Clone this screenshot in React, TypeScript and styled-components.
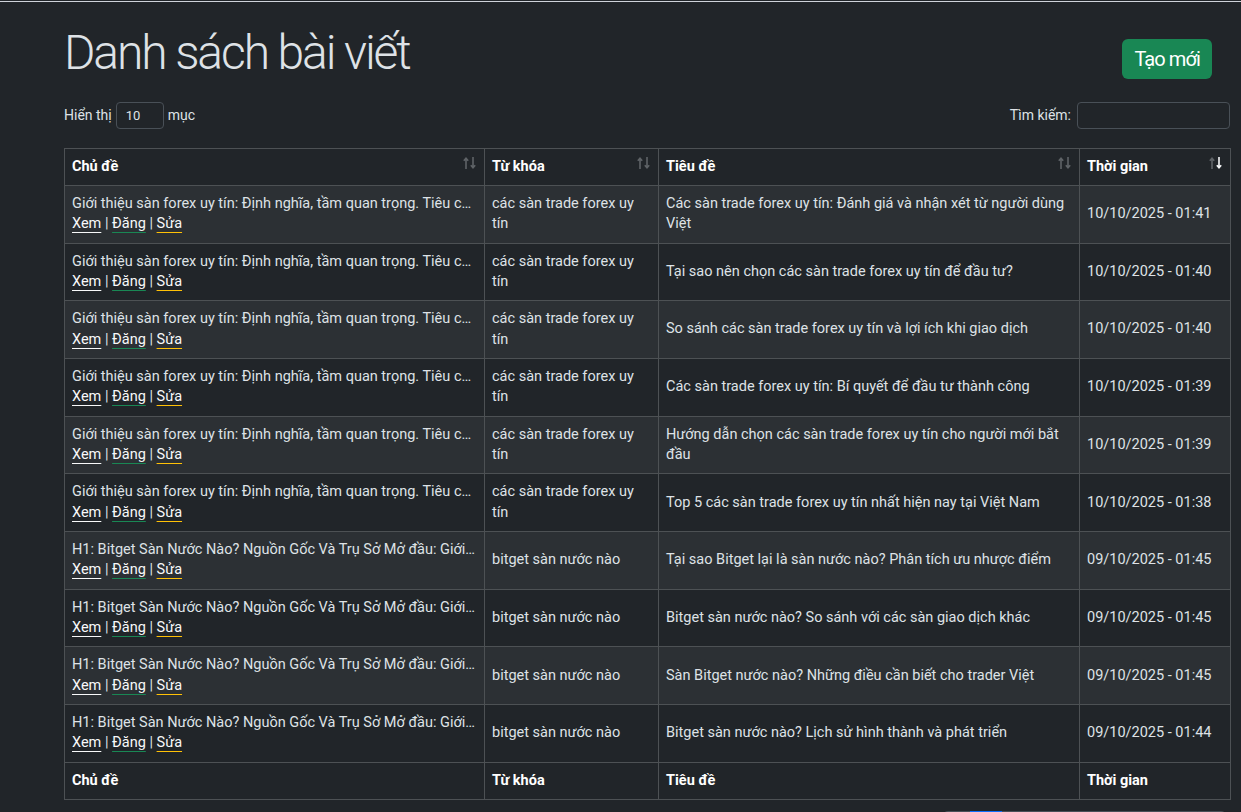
import styled, { createGlobalStyle } from "styled-components";

const GlobalStyle = createGlobalStyle`
  html, body {
    margin: 0;
    background: #212529;
  }
  body {
    padding-top: 1px;
    font-family: Roboto, "Liberation Sans", sans-serif;
    color: #dee2e6;
    font-size: 14px;
  }
`;

const Page = styled.div`
  border-top: 1px solid #cfd3da;
  padding: 0 11px 40px 64px;
`;

const Header = styled.div`
  display: flex;
  justify-content: space-between;
  align-items: flex-start;
  padding-right: 18px;
`;

const Title = styled.h1`
  margin: 22px 0 0;
  font-size: 48px;
  font-weight: 300;
  line-height: 1.2;
  letter-spacing: -2.1px;
  color: #dee2e6;
`;

const CreateButton = styled.button`
  margin-top: 37px;
  height: 40px;
  padding: 0 12px;
  border: none;
  border-radius: 6px;
  background: #198754;
  color: #fff;
  font-family: inherit;
  font-size: 20px;
  letter-spacing: -0.9px;
  cursor: pointer;
`;

const Controls = styled.div`
  display: flex;
  justify-content: space-between;
  align-items: center;
  margin-top: 20px;
  margin-bottom: 19px;
`;

const ControlGroup = styled.label`
  display: flex;
  align-items: center;
  gap: 4px;
  font-size: 14px;
  color: #dee2e6;
`;

const SmallSelect = styled.div`
  box-sizing: border-box;
  width: 48px;
  height: 27px;
  padding-left: 9px;
  display: flex;
  align-items: center;
  border: 1px solid #495057;
  border-radius: 4px;
  font-size: 13px;
  color: #dee2e6;
`;

const SearchInput = styled.input`
  box-sizing: border-box;
  width: 153px;
  height: 27px;
  margin-left: 2px;
  border: 1px solid #495057;
  border-radius: 4px;
  background: transparent;
  color: #dee2e6;
`;

const Table = styled.table`
  width: 100%;
  table-layout: fixed;
  border-collapse: collapse;
  font-size: 14.5px;
  line-height: 20.35px;
`;

const HeadCell = styled.th`
  border: 1px solid #4d5154;
  padding: 8px 7px;
  text-align: left;
  color: #fff;
  font-weight: 700;
  background: #212529;
`;

const HeadInner = styled.div`
  display: flex;
  justify-content: space-between;
  align-items: flex-start;
`;

const SortIcon = styled.svg`
  flex: none;
  margin-top: -1px;
  margin-right: 1px;
`;

const Row = styled.tr<{ $striped: boolean }>`
  background: ${({ $striped }) => ($striped ? "#2c3034" : "#212529")};
`;

const Cell = styled.td`
  border: 1px solid #4d5154;
  padding: 8px 7px;
  vertical-align: middle;
  color: #dee2e6;
`;

const Truncate = styled.div`
  white-space: nowrap;
  overflow: hidden;
  text-overflow: ellipsis;
`;

const ActionLink = styled.a<{ $line: string }>`
  color: #f8f9fa;
  text-decoration: underline;
  text-decoration-color: ${({ $line }) => $line};
  text-underline-offset: 4px;
  cursor: pointer;
`;

const Pagination = styled.ul`
  display: flex;
  justify-content: flex-end;
  list-style: none;
  margin: 11px 3px 0 0;
  padding: 0;
`;

const PageItem = styled.li<{ $active?: boolean; $w: number }>`
  box-sizing: border-box;
  width: ${({ $w }) => $w}px;
  height: 36px;
  display: flex;
  align-items: center;
  justify-content: center;
  margin-left: -1px;
  border: 1px solid ${({ $active }) => ($active ? "#0d6efd" : "#495057")};
  background: ${({ $active }) => ($active ? "#0d6efd" : "#212529")};
  color: ${({ $active }) => ($active ? "#fff" : "#6ea8fe")};
  font-size: 14px;
  &:first-child {
    border-radius: 6px 0 0 6px;
  }
  &:last-child {
    border-radius: 0 6px 6px 0;
  }
`;

interface Post {
  topic: string;
  keyword: string;
  title: string;
  time: string;
}

const forexTopic =
  "Giới thiệu sàn forex uy tín: Định nghĩa, tầm quan trọng. Tiêu chí đánh giá sàn forex uy tín";
const bitgetTopic =
  "H1: Bitget Sàn Nước Nào? Nguồn Gốc Và Trụ Sở Mở đầu: Giới thiệu về Bitget";

const posts: Post[] = [
  { topic: forexTopic, keyword: "các sàn trade forex uy tín", title: "Các sàn trade forex uy tín: Đánh giá và nhận xét từ người dùng Việt", time: "10/10/2025 - 01:41" },
  { topic: forexTopic, keyword: "các sàn trade forex uy tín", title: "Tại sao nên chọn các sàn trade forex uy tín để đầu tư?", time: "10/10/2025 - 01:40" },
  { topic: forexTopic, keyword: "các sàn trade forex uy tín", title: "So sánh các sàn trade forex uy tín và lợi ích khi giao dịch", time: "10/10/2025 - 01:40" },
  { topic: forexTopic, keyword: "các sàn trade forex uy tín", title: "Các sàn trade forex uy tín: Bí quyết để đầu tư thành công", time: "10/10/2025 - 01:39" },
  { topic: forexTopic, keyword: "các sàn trade forex uy tín", title: "Hướng dẫn chọn các sàn trade forex uy tín cho người mới bắt đầu", time: "10/10/2025 - 01:39" },
  { topic: forexTopic, keyword: "các sàn trade forex uy tín", title: "Top 5 các sàn trade forex uy tín nhất hiện nay tại Việt Nam", time: "10/10/2025 - 01:38" },
  { topic: bitgetTopic, keyword: "bitget sàn nước nào", title: "Tại sao Bitget lại là sàn nước nào? Phân tích ưu nhược điểm", time: "09/10/2025 - 01:45" },
  { topic: bitgetTopic, keyword: "bitget sàn nước nào", title: "Bitget sàn nước nào? So sánh với các sàn giao dịch khác", time: "09/10/2025 - 01:45" },
  { topic: bitgetTopic, keyword: "bitget sàn nước nào", title: "Sàn Bitget nước nào? Những điều cần biết cho trader Việt", time: "09/10/2025 - 01:45" },
  { topic: bitgetTopic, keyword: "bitget sàn nước nào", title: "Bitget sàn nước nào? Lịch sử hình thành và phát triển", time: "09/10/2025 - 01:44" },
];

const columns = [
  { label: "Chủ đề", width: 420 },
  { label: "Từ khóa", width: 174 },
  { label: "Tiêu đề", width: 421 },
  { label: "Thời gian", width: 151, sorted: true },
];

const pages = [
  { label: "‹", w: 29 },
  { label: "1", w: 33, active: true },
  { label: "2", w: 32 },
  { label: "3", w: 32 },
  { label: "4", w: 32 },
  { label: "5", w: 32 },
  { label: "…", w: 33 },
  { label: "10", w: 40 },
  { label: "›", w: 30 },
];

const SortArrows = ({ active }: { active?: boolean }) => (
  <SortIcon width="13" height="14" viewBox="0 0 13 14">
    <g fill="none" stroke="#5f6367" strokeWidth="1.6">
      <path d="M3 13V2.5M0.8 4.8L3 2.3L5.2 4.8" />
    </g>
    <g fill="none" stroke={active ? "#f8f9fa" : "#5f6367"} strokeWidth="1.6">
      <path d="M10 1V11.5M7.8 9.2L10 11.7L12.2 9.2" />
    </g>
  </SortIcon>
);

const App = () => {
  return (
    <Page>
      <GlobalStyle />
      <Header>
        <Title>Danh sách bài viết</Title>
        <CreateButton>Tạo mới</CreateButton>
      </Header>
      <Controls>
        <ControlGroup>
          Hiển thị <SmallSelect>10</SmallSelect> mục
        </ControlGroup>
        <ControlGroup>
          Tìm kiếm: <SearchInput />
        </ControlGroup>
      </Controls>
      <Table>
        <colgroup>
          {columns.map((c) => (
            <col key={c.label} style={{ width: c.width }} />
          ))}
        </colgroup>
        <thead>
          <tr>
            {columns.map((c) => (
              <HeadCell key={c.label}>
                <HeadInner>
                  {c.label}
                  <SortArrows active={c.sorted} />
                </HeadInner>
              </HeadCell>
            ))}
          </tr>
        </thead>
        <tbody>
          {posts.map((p, i) => (
            <Row key={i} $striped={i % 2 === 0}>
              <Cell>
                <Truncate>{p.topic}</Truncate>
                <div>
                  <ActionLink $line="#f8f9fa">Xem</ActionLink> |{" "}
                  <ActionLink $line="#198754">Đăng</ActionLink> |{" "}
                  <ActionLink $line="#ffc107">Sửa</ActionLink>
                </div>
              </Cell>
              <Cell>{p.keyword}</Cell>
              <Cell>{p.title}</Cell>
              <Cell>{p.time}</Cell>
            </Row>
          ))}
        </tbody>
        <tfoot>
          <tr>
            {columns.map((c) => (
              <HeadCell key={c.label}>{c.label}</HeadCell>
            ))}
          </tr>
        </tfoot>
      </Table>
      <Pagination>
        {pages.map((pg) => (
          <PageItem key={pg.label} $active={pg.active} $w={pg.w}>
            {pg.label}
          </PageItem>
        ))}
      </Pagination>
    </Page>
  );
};

export default App;
